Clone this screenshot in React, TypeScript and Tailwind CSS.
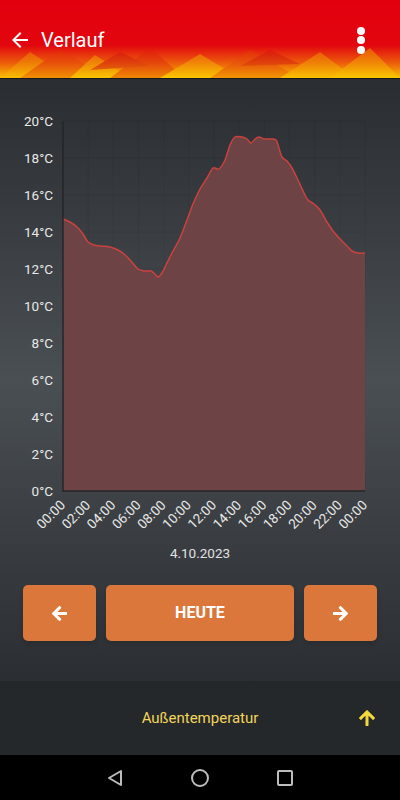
import React from "react"

const pts: [number, number][] = [
  [63, 219], [70, 222], [77, 227], [83, 234], [88, 242], [94, 245], [100, 246], [110, 247],
  [118, 250], [124, 254], [130, 260], [138, 269], [145, 271], [151, 271], [155, 274], [158, 277],
  [162, 273], [166, 265], [172, 253], [180, 238], [187, 220], [193, 204], [200, 189], [207, 178],
  [213, 168], [219, 169], [225, 160], [230, 145], [235, 137], [242, 137], [247, 139], [251, 143],
  [255, 139], [259, 137], [264, 139], [270, 139], [276, 140], [279, 148], [282, 157], [287, 161],
  [292, 168], [298, 180], [304, 193], [308, 200], [314, 204], [320, 210], [327, 222], [333, 231],
  [340, 239], [347, 246], [352, 251], [358, 253], [365, 253],
]

// catmull-rom -> bezier
function smooth(p: [number, number][]) {
  let d = `M${p[0][0]},${p[0][1]}`
  for (let i = 0; i < p.length - 1; i++) {
    const p0 = p[i - 1] || p[i]
    const p1 = p[i]
    const p2 = p[i + 1]
    const p3 = p[i + 2] || p2
    const c1x = p1[0] + (p2[0] - p0[0]) / 6
    const c1y = p1[1] + (p2[1] - p0[1]) / 6
    const c2x = p2[0] - (p3[0] - p1[0]) / 6
    const c2y = p2[1] - (p3[1] - p1[1]) / 6
    d += ` C${c1x},${c1y} ${c2x},${c2y} ${p2[0]},${p2[1]}`
  }
  return d
}

const X0 = 63
const X1 = 365
const Y0 = 491
const Y1 = 121
const step = (X1 - X0) / 12
const hours = ["00:00", "02:00", "04:00", "06:00", "08:00", "10:00", "12:00", "14:00", "16:00", "18:00", "20:00", "22:00", "00:00"]
const temps = [0, 2, 4, 6, 8, 10, 12, 14, 16, 18, 20]

function Chart() {
  const line = smooth(pts)
  const area = `${line} L${X1},${Y0} L${X0},${Y0} Z`
  return (
    <svg width="400" height="440" viewBox="0 100 400 440" className="block" style={{ fontFamily: "Roboto, 'Liberation Sans', sans-serif" }}>
      {/* grid */}
      {temps.map((t) => {
        const y = Y0 - (t / 20) * (Y0 - Y1)
        return <line key={"h" + t} x1={X0} x2={X1} y1={y} y2={y} stroke="rgba(0,0,0,0.06)" strokeWidth="1" />
      })}
      {hours.map((_, i) => {
        const x = X0 + i * step
        return <line key={"v" + i} x1={x} x2={x} y1={Y1} y2={Y0} stroke="rgba(0,0,0,0.06)" strokeWidth="1" />
      })}
      <path d={area} fill="#6d4345" />
      <path d={line} fill="none" stroke="#c9423f" strokeWidth="1.5" />
      <line x1={X0} x2={X0} y1={Y1} y2={Y0 + 1} stroke="#24272a" strokeWidth="1.5" />
      <line x1={X0} x2={X1} y1={Y0} y2={Y0} stroke="#24272a" strokeWidth="1.5" />
      {temps.map((t) => {
        const y = Y0 - (t / 20) * (Y0 - Y1)
        return (
          <text key={"t" + t} x="53" y={y + 5} textAnchor="end" fontSize="13.5" fill="#e8e8e8">
            {t}°C
          </text>
        )
      })}
      {hours.map((h, i) => {
        const x = X0 + i * step + 3
        const y = 506
        return (
          <text key={"x" + i} x={x} y={y} textAnchor="end" fontSize="13.5" fill="#e8e8e8" transform={`rotate(-45 ${x} ${y})`}>
            {h}
          </text>
        )
      })}
    </svg>
  )
}

function Arrow({ dir, className, bold }: { dir: "left" | "right" | "up"; className?: string; bold?: boolean }) {
  const rot = dir === "left" ? 0 : dir === "right" ? 180 : 90
  return (
    <svg viewBox="0 0 24 24" className={className} style={{ transform: `rotate(${rot}deg)` }}>
      <path
        fill="currentColor"
        stroke={bold ? "currentColor" : "none"}
        strokeWidth={bold ? 1.3 : 0}
        strokeLinejoin="round"
        d="M20 11H7.83l5.59-5.59L12 4l-8 8 8 8 1.41-1.41L7.83 13H20v-2z"
      />
    </svg>
  )
}

function HeaderPattern() {
  return (
    <svg className="absolute inset-0" width="400" height="78" viewBox="0 0 400 78" preserveAspectRatio="none">
      <defs>
        <linearGradient id="hg" x1="0" y1="0" x2="0" y2="1">
          <stop offset="0" stopColor="#e2000e" />
          <stop offset="0.58" stopColor="#e2060e" />
          <stop offset="0.8" stopColor="#ec5a0c" />
          <stop offset="1" stopColor="#f9c000" />
        </linearGradient>
      </defs>
      <rect width="400" height="78" fill="url(#hg)" />
      <g opacity="0.35">
        <polygon points="0,78 30,52 70,78" fill="#f6b800" />
        <polygon points="20,78 60,50 110,78" fill="#e03a0a" />
        <polygon points="70,78 95,55 130,78" fill="#f9d000" />
        <polygon points="110,78 150,48 185,78" fill="#d9200c" />
        <polygon points="160,78 200,54 240,78" fill="#fbd200" />
        <polygon points="210,78 250,50 300,78" fill="#e24a0a" />
        <polygon points="280,78 320,52 355,78" fill="#f7c400" />
        <polygon points="330,78 370,48 400,78" fill="#fad400" />
        <polygon points="120,52 150,66 90,70" fill="#c8100e" />
        <polygon points="270,50 300,64 240,66" fill="#c8100e" />
      </g>
    </svg>
  )
}

export default function App() {
  return (
    <div className="w-[400px] h-[800px] flex flex-col overflow-hidden" style={{ fontFamily: "Roboto, 'Liberation Sans', sans-serif" }}>
      {/* header */}
      <div className="relative h-[78px] shrink-0 overflow-hidden">
        <HeaderPattern />
        <div className="relative flex items-center h-[78px]">
          <div className="flex items-center h-[56px] w-full pl-[8px] pr-[35px] mt-[2px]">
            <Arrow dir="left" className="w-6 h-6 text-white" />
            <span className="ml-[9px] text-[20px] font-normal text-white leading-none">Verlauf</span>
            <div className="ml-auto flex flex-col gap-[1.5px]">
              <span className="w-[8px] h-[8px] rounded-full bg-white" />
              <span className="w-[8px] h-[8px] rounded-full bg-white" />
              <span className="w-[8px] h-[8px] rounded-full bg-white" />
            </div>
          </div>
        </div>
      </div>
      <div className="h-px bg-[#15171a] shrink-0" />

      {/* main */}
      <div className="flex-1 flex flex-col bg-gradient-to-b from-[#2a2d31] via-[#4a4f53] to-[#2b2e32]">
        <div className="pt-[21px]">
          <Chart />
        </div>
        <div className="text-center text-[13.5px] text-[#e0e0e0] leading-[16px] mt-[5px]">4.10.2023</div>
        <div className="flex gap-[10px] px-[23px] mt-[24px]">
          <button className="w-[73px] h-[56px] rounded-[5px] bg-[#db773a] shadow-md flex items-center justify-center text-white">
            <Arrow dir="left" bold className="w-[21px] h-[21px]" />
          </button>
          <button className="flex-1 h-[56px] rounded-[5px] bg-[#db773a] shadow-md flex items-center justify-center text-white text-[16px] font-bold">
            HEUTE
          </button>
          <button className="w-[73px] h-[56px] rounded-[5px] bg-[#db773a] shadow-md flex items-center justify-center text-white">
            <Arrow dir="right" bold className="w-[21px] h-[21px]" />
          </button>
        </div>
      </div>

      {/* bottom selector */}
      <div className="h-[74px] shrink-0 bg-[#25282b] flex items-center relative">
        <span className="mx-auto text-[15px] text-[#f2d55a]">Außentemperatur</span>
        <Arrow dir="up" bold className="absolute right-[22px] top-[26px] w-[22px] h-[22px] text-[#f7dc3c]" />
      </div>

      {/* nav */}
      <div className="h-[45px] shrink-0 bg-black flex items-center justify-center gap-[62px]">
        <svg width="18" height="18" viewBox="0 0 18 18">
          <polygon points="15,2 15,16 3,9" fill="none" stroke="#bdbdbd" strokeWidth="2" strokeLinejoin="round" />
        </svg>
        <svg width="20" height="20" viewBox="0 0 20 20" className="mx-[4px]">
          <circle cx="10" cy="10" r="8" fill="none" stroke="#bdbdbd" strokeWidth="2" />
        </svg>
        <svg width="18" height="18" viewBox="0 0 18 18">
          <rect x="2" y="2" width="14" height="14" rx="1" fill="none" stroke="#bdbdbd" strokeWidth="2" />
        </svg>
      </div>
    </div>
  )
}
